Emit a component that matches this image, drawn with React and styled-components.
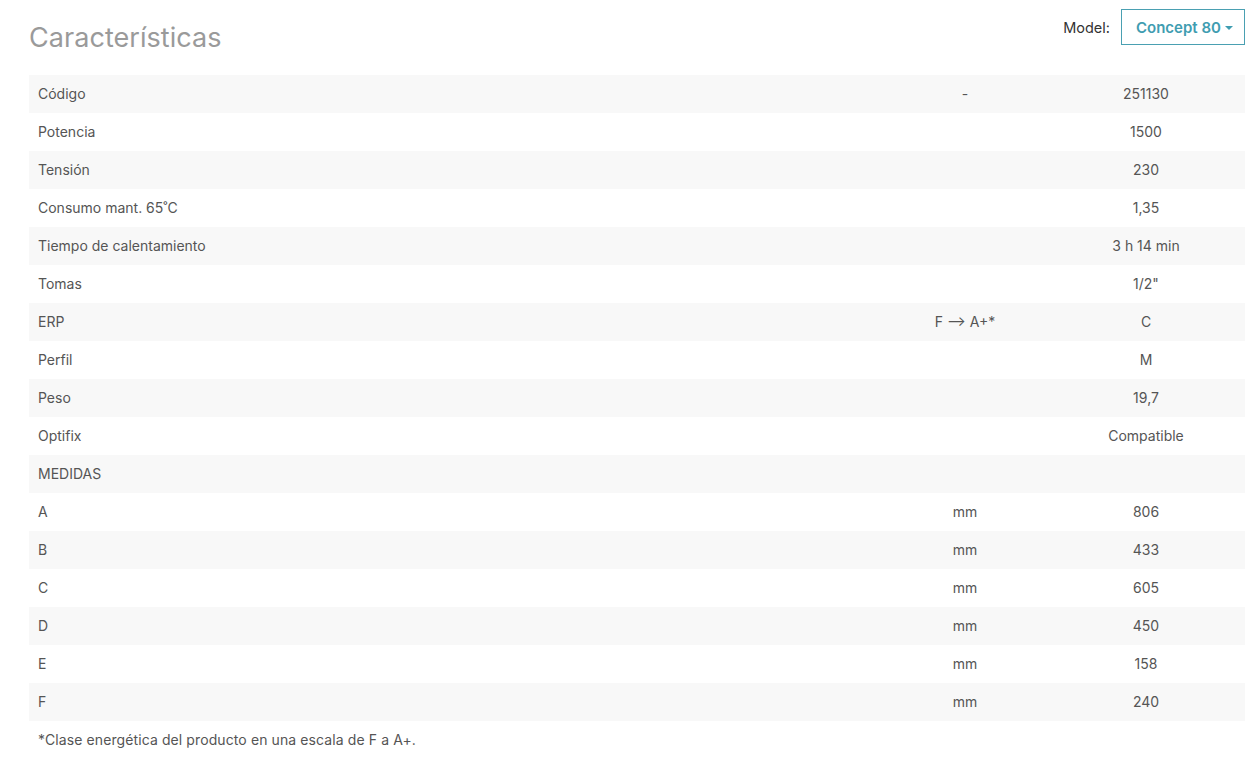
import React from "react";
import styled, { createGlobalStyle } from "styled-components";

const Global = createGlobalStyle`
  html, body { margin: 0; padding: 0; background: #fff; }
  body { font-family: Inter, "Noto Sans", "Liberation Sans", sans-serif; color: #555; }
`;

const Page = styled.div`
  padding: 9px 1px 0 29px;
`;

const Header = styled.div`
  display: flex;
  justify-content: space-between;
  align-items: flex-start;
  height: 66px;
`;

const Title = styled.h2`
  margin: 12px 0 0;
  font-size: 27px;
  font-weight: 400;
  color: #9a9a9a;
  letter-spacing: 0.05px;
`;

const ModelPicker = styled.div`
  display: flex;
  align-items: center;
  gap: 11px;
`;

const ModelLabel = styled.span`
  font-size: 14.5px;
  color: #333;
`;

const ModelButton = styled.button`
  box-sizing: border-box;
  width: 124px;
  height: 36px;
  border: 1px solid #4aa0b2;
  background: #fff;
  color: #3f9db1;
  font-family: inherit;
  font-size: 15px;
  font-weight: 600;
  padding: 0 0 0 14px;
  display: flex;
  align-items: center;
  gap: 4px;
  cursor: pointer;
`;

const Caret = styled.span`
  width: 0;
  height: 0;
  border-left: 4px solid transparent;
  border-right: 4px solid transparent;
  border-top: 4px solid #3f9db1;
  margin-top: 2px;
`;

const Table = styled.div`
  display: flex;
  flex-direction: column;
`;

const Row = styled.div`
  display: grid;
  grid-template-columns: 1fr 164px 198px;
  height: 38px;
  align-items: center;
  background: ${(p) => (p.$shaded ? "#f8f8f8" : "#fff")};
  font-size: 14px;
  line-height: 16px;
  padding-bottom: 1px;
  box-sizing: border-box;
  color: #555;
`;

const Label = styled.div`
  padding-left: 9px;
`;

const Cell = styled.div`
  text-align: center;
`;

const Note = styled.p`
  margin: 10px 0 0 9px;
  font-size: 14px;
  letter-spacing: 0.1px;
  color: #555;
`;

const rows = [
  ["Código", "-", "251130"],
  ["Potencia", "", "1500"],
  ["Tensión", "", "230"],
  ["Consumo mant. 65˚C", "", "1,35"],
  ["Tiempo de calentamiento", "", "3 h 14 min"],
  ["Tomas", "", '1/2"'],
  ["ERP", "F ⟶ A+*", "C"],
  ["Perfil", "", "M"],
  ["Peso", "", "19,7"],
  ["Optifix", "", "Compatible"],
  ["MEDIDAS", "", ""],
  ["A", "mm", "806"],
  ["B", "mm", "433"],
  ["C", "mm", "605"],
  ["D", "mm", "450"],
  ["E", "mm", "158"],
  ["F", "mm", "240"],
];

export default function App() {
  return (
    <Page>
      <Global />
      <Header>
        <Title>Características</Title>
        <ModelPicker>
          <ModelLabel>Model:</ModelLabel>
          <ModelButton>
            Concept 80 <Caret />
          </ModelButton>
        </ModelPicker>
      </Header>
      <Table>
        {rows.map(([a, b, c], i) => (
          <Row key={i} $shaded={i % 2 === 0}>
            <Label>{a}</Label>
            <Cell>{b}</Cell>
            <Cell>{c}</Cell>
          </Row>
        ))}
      </Table>
      <Note>*Clase energética del producto en una escala de F a A+.</Note>
    </Page>
  );
}
